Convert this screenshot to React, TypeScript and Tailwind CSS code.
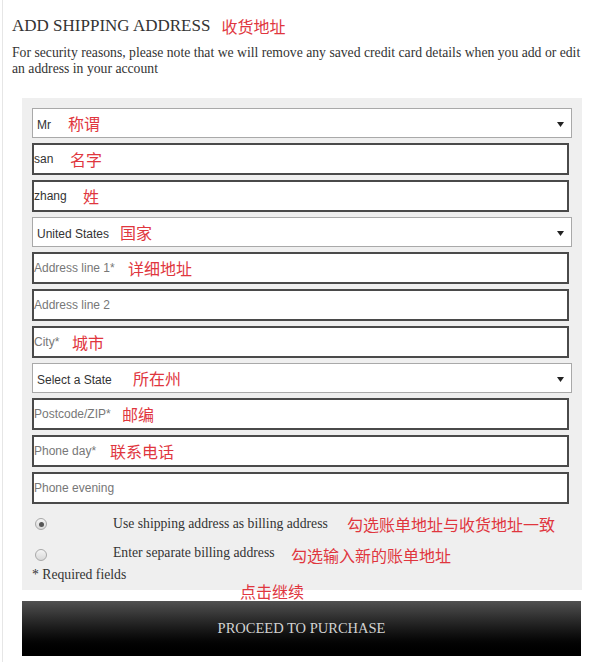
import React from 'react';

const serif = "font-['Liberation_Serif','Times_New_Roman',serif]";
const sans = "font-['Liberation_Sans',Arial,sans-serif]";
const cjk = "font-['Noto_Sans_CJK_SC',sans-serif]";

// red annotation laid over a field
const Note = ({ text, left }: { text: string; left: number }) => (
  <span
    className={`absolute top-0 bottom-0 flex items-center text-[16px] leading-[20px] text-[#e0363e] whitespace-nowrap ${cjk}`}
    style={{ left }}
  >
    {text}
  </span>
);

const SelectBox = ({ value, note, noteLeft }: { value: string; note?: string; noteLeft?: number }) => (
  <div className={`relative h-[30px] w-[540px] bg-white border border-[#a9a9a9] flex items-center pl-[4px] pt-[3px] text-[12px] text-[#333] ${sans}`}>
    <span>{value}</span>
    {note && <Note text={note} left={noteLeft ?? 0} />}
    <svg className="absolute right-[7px] top-[13px]" width="7" height="5" viewBox="0 0 7 5">
      <polygon points="0,0 7,0 3.5,5" fill="#222" />
    </svg>
  </div>
);

const TextBox = ({
  value,
  placeholder,
  note,
  noteLeft,
}: {
  value?: string;
  placeholder?: string;
  note?: string;
  noteLeft?: number;
}) => (
  <div className={`relative h-[32px] w-[537px] bg-white border-2 border-[#4a4a4a] flex items-center text-[12px] ${sans}`}>
    {value ? <span className="text-[#333]">{value}</span> : <span className="text-[#777]">{placeholder}</span>}
    {note && <Note text={note} left={noteLeft ?? 0} />}
  </div>
);

const Radio = ({ checked }: { checked?: boolean }) => (
  <span className="w-[12px] h-[12px] rounded-full border border-[#a8a8a8] bg-linear-to-b from-[#f4f4f4] to-[#d8d8d8] flex items-center justify-center shrink-0">
    {checked && <span className="w-[5px] h-[5px] rounded-full bg-[#555]" />}
  </span>
);

export default function App() {
  return (
    <div className="w-[600px] min-h-[662px] bg-white pl-[2px]">
      <div className={`min-h-[662px] border-l border-[#e6e6e6] pl-[9px] pr-[10px] pt-[16px] text-[#333] ${serif}`}>
        <div className="flex items-center h-[20px]">
          <h1 className="text-[17px] leading-[20px] font-normal">ADD SHIPPING ADDRESS</h1>
          <span className={`ml-[11px] text-[16px] leading-[20px] text-[#e0363e] ${cjk}`}>收货地址</span>
        </div>
        <p className="mt-[9px] text-[13.7px] leading-[16px]">
          For security reasons, please note that we will remove any saved credit card details when you add or edit
          an address in your account
        </p>

        <div className="relative mt-[21px] ml-[10px] w-[560px] bg-[#efefef] pt-[10px] px-[10px] pb-[7px]">
          <div className="flex flex-col gap-[5px]">
            <SelectBox value="Mr" note="称谓" noteLeft={35} />
            <TextBox value="san" note="名字" noteLeft={36} />
            <TextBox value="zhang" note="姓" noteLeft={49} />
            <SelectBox value="United States" note="国家" noteLeft={87} />
            <TextBox placeholder="Address line 1*" note="详细地址" noteLeft={94} />
            <TextBox placeholder="Address line 2" />
            <TextBox placeholder="City*" note="城市" noteLeft={38} />
            <SelectBox value="Select a State" note="所在州" noteLeft={100} />
            <TextBox placeholder="Postcode/ZIP*" note="邮编" noteLeft={88} />
            <TextBox placeholder="Phone day*" note="联系电话" noteLeft={76} />
            <TextBox placeholder="Phone evening" />
          </div>

          <div className="relative mt-[5px] h-[30px] flex items-center text-[13.7px]">
            <span className="ml-[3px]">
              <Radio checked />
            </span>
            <span className="ml-[66px]">Use shipping address as billing address</span>
            <Note text="勾选账单地址与收货地址一致" left={315} />
          </div>
          <div className="relative h-[28px] flex items-center text-[13.7px]">
            <span className="ml-[3px] mt-[4px]">
              <Radio />
            </span>
            <span className="ml-[66px]">Enter separate billing address</span>
            <span
              className={`absolute left-[259px] top-[6px] text-[16px] leading-[20px] text-[#e0363e] whitespace-nowrap ${cjk}`}
            >
              勾选输入新的账单地址
            </span>
          </div>
          <div className="text-[13.7px] leading-[16px]">* Required fields</div>

          <span className={`absolute left-[218px] top-[483px] text-[16px] leading-[20px] text-[#e0363e] ${cjk}`}>
            点击继续
          </span>
        </div>

        <button className="mt-[11px] ml-[10px] w-[559px] h-[55px] bg-linear-to-b from-[#525252] to-black flex items-center justify-center text-[14.5px] text-[#d2d2d2]">
          PROCEED TO PURCHASE
        </button>
      </div>
    </div>
  );
}
